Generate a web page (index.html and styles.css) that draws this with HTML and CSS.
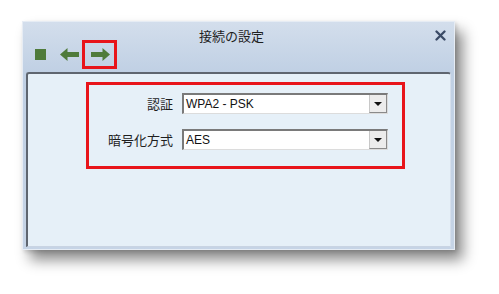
FILE: index.html
```html
<!DOCTYPE html>
<html lang="ja">
<head>
<meta charset="utf-8">
<link rel="stylesheet" href="styles.css">
</head>
<body>
<div class="window">
  <div class="header">
    <div class="title">接続の設定</div>
    <svg class="close" width="11" height="11" viewBox="0 0 11 11"><path d="M1.5 1.5 L9.5 9.5 M9.5 1.5 L1.5 9.5" stroke="#3a4a66" stroke-width="2.3" stroke-linecap="round"/></svg>
    <div class="toolbar">
      <span class="icon-stop"></span>
      <svg class="arrow" width="19" height="13" viewBox="0 0 19 13"><path d="M0 6.5 L7.5 0 L7.5 4 L19 4 L19 9 L7.5 9 L7.5 13 Z" fill="#4f7b3b"/></svg>
      <span class="hl-btn">
        <svg class="arrow" width="19" height="13" viewBox="0 0 19 13"><path d="M19 6.5 L11.5 0 L11.5 4 L0 4 L0 9 L11.5 9 L11.5 13 Z" fill="#4f7b3b"/></svg>
      </span>
    </div>
  </div>
  <div class="panel">
    <div class="form-box">
      <label class="lbl">認証</label>
      <div class="select"><span class="val">WPA2 - PSK</span><span class="drop"><i></i></span></div>
      <label class="lbl">暗号化方式</label>
      <div class="select"><span class="val">AES</span><span class="drop"><i></i></span></div>
    </div>
  </div>
</div>
</body>
</html>
```

FILE: styles.css
```css
html, body {
  margin: 0;
  padding: 0;
  background: #ffffff;
}
body {
  width: 499px;
  height: 294px;
  overflow: hidden;
  font-family: "Noto Sans CJK JP", "Noto Sans", sans-serif;
}
.window {
  margin: 21px 0 0 22px;
  width: 433px;
  height: 229px;
  box-sizing: border-box;
  background: linear-gradient(#d3deec, #c0d0e4 50px, #c6d4e6);
  border: 1px solid #e6ecf4;
  box-shadow: 8px 10px 13px rgba(0, 0, 0, 0.45), 2px 2px 4px rgba(0,0,0,0.15);
  display: flex;
  flex-direction: column;
}
.header {
  height: 50px;
  display: grid;
  grid-template-columns: 1fr;
  grid-template-rows: 1fr;
}
.title {
  grid-area: 1 / 1;
  align-self: start;
  text-align: center;
  font-size: 13px;
  line-height: 16px;
  color: #1e1e1e;
  padding-top: 6px;
  padding-right: 14px;
}
.close {
  grid-area: 1 / 1;
  justify-self: end;
  align-self: start;
  margin: 8px 8px 0 0;
}
.toolbar {
  grid-area: 1 / 1;
  align-self: end;
  margin-bottom: 3px;
  height: 29px;
  display: flex;
  align-items: center;
  padding-left: 12px;
}
.icon-stop {
  width: 11px;
  height: 11px;
  background: #4f7b3b;
  margin-right: 14px;
}
.arrow {
  display: block;
}
.hl-btn {
  margin-left: 3px;
  width: 35px;
  height: 29px;
  box-sizing: border-box;
  border: 3px solid #e8141a;
  display: flex;
  align-items: center;
  justify-content: center;
  padding-left: 2px;
}
.panel {
  flex: 1;
  margin: 0 3px 2px 3px;
  background: #e6f0f8;
  border-top: 2px solid #5f6670;
  border-left: 2px solid #5f6670;
  border-right: 1px solid #d5dfec;
  border-bottom: 1px solid #c9d4e3;
  border-radius: 3px 3px 0 0;
  padding: 8px 0 0 58px;
}
.form-box {
  width: 319px;
  height: 87px;
  box-sizing: border-box;
  border: 3px solid #e8141a;
  display: grid;
  grid-template-columns: 84px 206px;
  column-gap: 9px;
  row-gap: 15px;
  align-content: start;
  align-items: center;
  padding-top: 8px;
}
.lbl {
  text-align: right;
  font-size: 13px;
  color: #1e1e1e;
  line-height: 20px;
}
.select {
  height: 21px;
  box-sizing: border-box;
  background: #ffffff;
  border-top: 2px solid #7a7a7a;
  border-left: 2px solid #7a7a7a;
  border-right: 1px solid #dcdcdc;
  border-bottom: 1px solid #dcdcdc;
  display: flex;
  align-items: stretch;
}
.val {
  flex: 1;
  font-family: "Liberation Sans", Arial, sans-serif;
  font-size: 12px;
  line-height: 18px;
  padding-left: 2px;
  color: #111;
}
.drop {
  width: 16px;
  background: #ececec;
  border-left: 1px solid #c8c8c8;
  border-right: 1px solid #8a8a8a;
  border-bottom: 1px solid #8a8a8a;
  display: flex;
  align-items: center;
  justify-content: center;
}
.drop i {
  width: 0;
  height: 0;
  border-left: 4px solid transparent;
  border-right: 4px solid transparent;
  border-top: 4px solid #111;
}
```
